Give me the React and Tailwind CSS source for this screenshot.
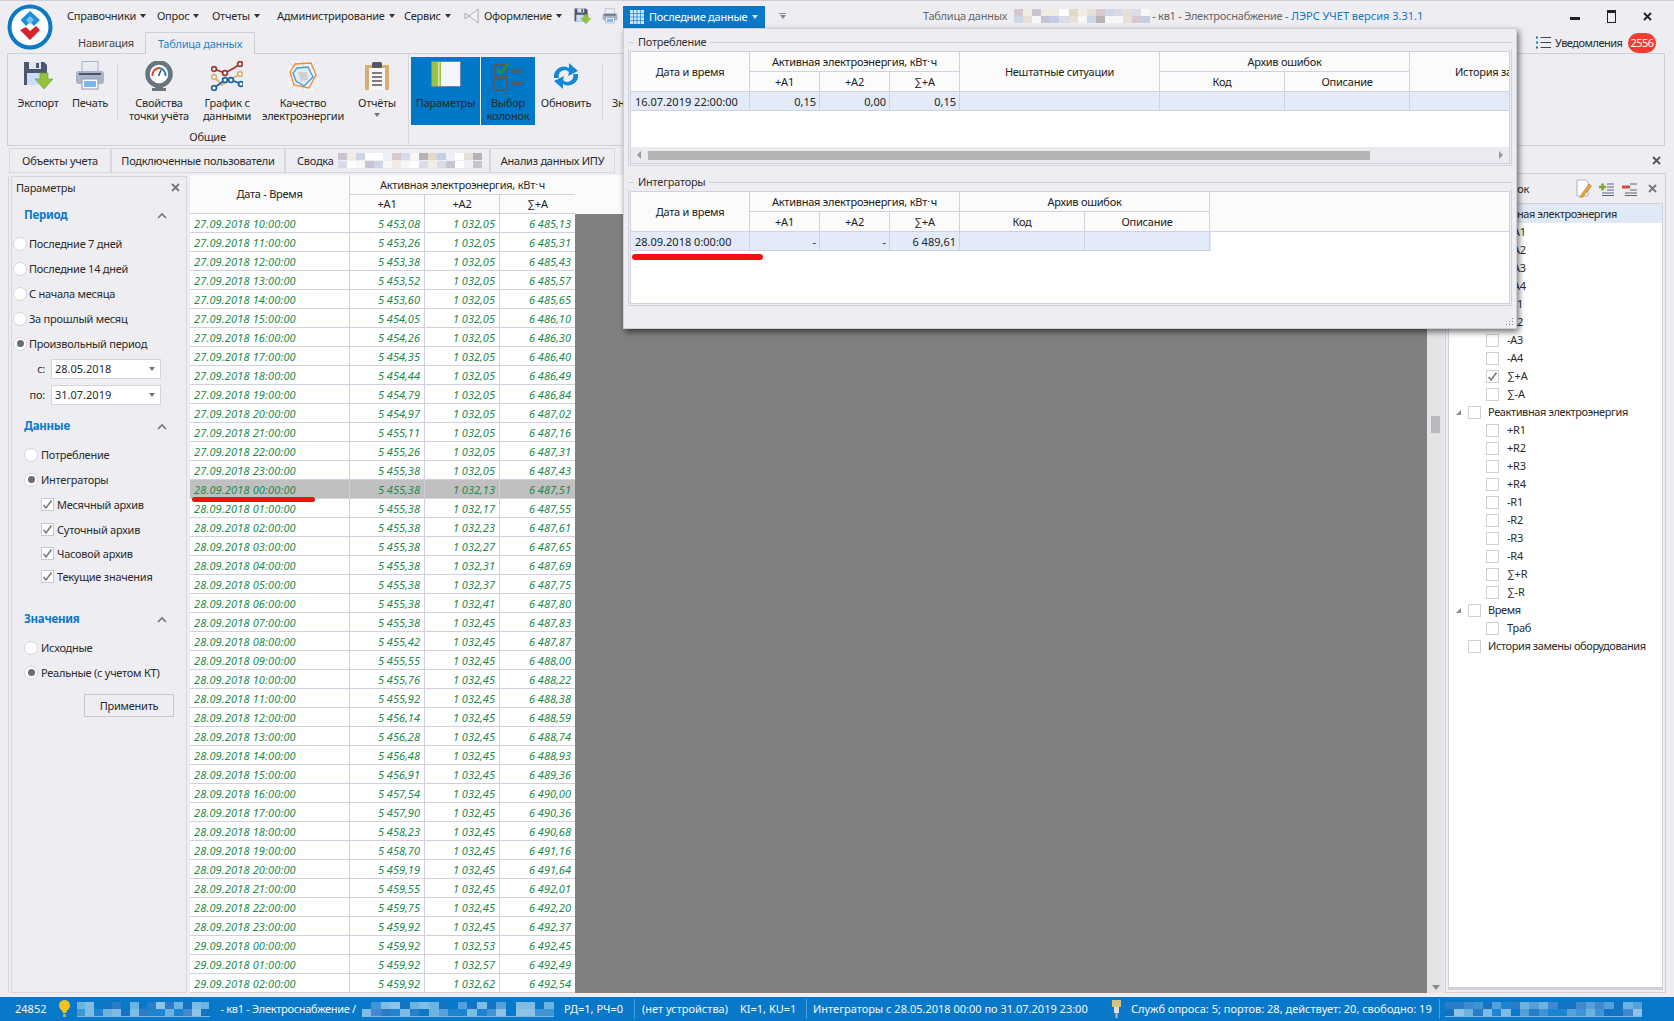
import React from 'react';

const RAW = `27.09.2018 10:00:00|5 453,08|1 032,05|6 485,13
27.09.2018 11:00:00|5 453,26|1 032,05|6 485,31
27.09.2018 12:00:00|5 453,38|1 032,05|6 485,43
27.09.2018 13:00:00|5 453,52|1 032,05|6 485,57
27.09.2018 14:00:00|5 453,60|1 032,05|6 485,65
27.09.2018 15:00:00|5 454,05|1 032,05|6 486,10
27.09.2018 16:00:00|5 454,26|1 032,05|6 486,30
27.09.2018 17:00:00|5 454,35|1 032,05|6 486,40
27.09.2018 18:00:00|5 454,44|1 032,05|6 486,49
27.09.2018 19:00:00|5 454,79|1 032,05|6 486,84
27.09.2018 20:00:00|5 454,97|1 032,05|6 487,02
27.09.2018 21:00:00|5 455,11|1 032,05|6 487,16
27.09.2018 22:00:00|5 455,26|1 032,05|6 487,31
27.09.2018 23:00:00|5 455,38|1 032,05|6 487,43
28.09.2018 00:00:00|5 455,38|1 032,13|6 487,51
28.09.2018 01:00:00|5 455,38|1 032,17|6 487,55
28.09.2018 02:00:00|5 455,38|1 032,23|6 487,61
28.09.2018 03:00:00|5 455,38|1 032,27|6 487,65
28.09.2018 04:00:00|5 455,38|1 032,31|6 487,69
28.09.2018 05:00:00|5 455,38|1 032,37|6 487,75
28.09.2018 06:00:00|5 455,38|1 032,41|6 487,80
28.09.2018 07:00:00|5 455,38|1 032,45|6 487,83
28.09.2018 08:00:00|5 455,42|1 032,45|6 487,87
28.09.2018 09:00:00|5 455,55|1 032,45|6 488,00
28.09.2018 10:00:00|5 455,76|1 032,45|6 488,22
28.09.2018 11:00:00|5 455,92|1 032,45|6 488,38
28.09.2018 12:00:00|5 456,14|1 032,45|6 488,59
28.09.2018 13:00:00|5 456,28|1 032,45|6 488,74
28.09.2018 14:00:00|5 456,48|1 032,45|6 488,93
28.09.2018 15:00:00|5 456,91|1 032,45|6 489,36
28.09.2018 16:00:00|5 457,54|1 032,45|6 490,00
28.09.2018 17:00:00|5 457,90|1 032,45|6 490,36
28.09.2018 18:00:00|5 458,23|1 032,45|6 490,68
28.09.2018 19:00:00|5 458,70|1 032,45|6 491,16
28.09.2018 20:00:00|5 459,19|1 032,45|6 491,64
28.09.2018 21:00:00|5 459,55|1 032,45|6 492,01
28.09.2018 22:00:00|5 459,75|1 032,45|6 492,20
28.09.2018 23:00:00|5 459,92|1 032,45|6 492,37
29.09.2018 00:00:00|5 459,92|1 032,53|6 492,45
29.09.2018 01:00:00|5 459,92|1 032,57|6 492,49
29.09.2018 02:00:00|5 459,92|1 032,62|6 492,54`.split('\n').map((l) => l.split('|'));

const PASTEL = ['#ffffff', '#eef2f8', '#d9dbe8', '#c9c4d4', '#e6e0d8', '#cdd6e6', '#b9b3b5', '#f0ece0', '#e2d9c6', '#d8c7cf', '#c3cfe6', '#f7f7f7'];
const BLUES = ['#0a78c8', '#3f94d6', '#6cb3e0', '#2a7cc9', '#1c84d0', '#559fdb', '#7fbce4', '#4388cf', '#1272c4', '#8ec3e6'];

function Mosaic({ cols, seed, palette, line }) {
  const cells = [];
  let s = seed;
  for (let i = 0; i < cols * 2; i++) {
    s = (s * 73 + 41) % 1009;
    cells.push(palette[s % palette.length]);
  }
  return (
    <div className={`flex flex-wrap w-full h-[15px] overflow-hidden ${line ? 'border-b border-[#7fb8e6]' : ''}`}>
      {cells.map((c, i) => (
        <div key={i} className="h-[7px]" style={{ background: c, width: `${100 / cols}%` }} />
      ))}
    </div>
  );
}

const Caret = ({ className = 'border-t-[#333]' }) => (
  <span className={`inline-block w-0 h-0 border-x-[3.5px] border-x-transparent border-t-[4px] ${className}`} />
);

const Logo = () => (
  <svg width="46" height="46" viewBox="0 0 46 46">
    <circle cx="23" cy="23" r="20.5" fill="#fff" stroke="#0b79c6" strokeWidth="4" />
    <path d="M23 7 L33 16 L27 22 L23 18 L19 22 L13.5 16 Z" fill="#1e8fd6" />
    <path d="M19 16 L23 12 L27 16 L23 20 Z" fill="#7cc4ee" />
    <path d="M29 22 L33 26 L23 36 L13 26 L19 23 L23 27 Z" fill="#d8232f" />
  </svg>
);

const SaveIcon = ({ s = 30 }) => (
  <svg width={s} height={s} viewBox="0 0 30 30">
    <path d="M1 1 H21 L24 4 V24 H1 Z" fill="#4c566e" />
    <rect x="6" y="1" width="12" height="7" fill="#dfe5ef" />
    <rect x="13" y="2" width="3" height="5" fill="#4c566e" />
    <rect x="4" y="12" width="17" height="12" fill="#c9def5" />
    <path d="M17 12 H25 V18 H30 L21 28 L12 18 H17 Z" fill="#94c23f" stroke="#6f9a2c" strokeWidth="0.6" />
  </svg>
);
const PrintIcon = ({ s = 30 }) => (
  <svg width={s} height={s} viewBox="0 0 30 30">
    <rect x="7" y="0.5" width="16" height="11" fill="#e9ecf3" stroke="#a9b1c4" />
    <rect x="1" y="10" width="28" height="13" rx="3" fill="#aab4c9" />
    <rect x="4" y="12" width="22" height="2" fill="#4b556c" />
    <rect x="7" y="18" width="16" height="10" fill="#fff" stroke="#8c96ad" />
    <rect x="9" y="20" width="12" height="6" fill="#7fb7e6" />
  </svg>
);
const GaugeIcon = () => (
  <svg width="28" height="30" viewBox="0 0 28 30">
    <rect x="10" y="20" width="8" height="9" fill="#6b7680" />
    <rect x="7" y="27" width="14" height="3" fill="#6b7680" />
    <circle cx="14" cy="13" r="11.5" fill="#fff" stroke="#68747e" strokeWidth="4.5" />
    <path d="M7.5 15 A7 7 0 0 1 14 7" fill="none" stroke="#e0432f" strokeWidth="2" />
    <path d="M14 7 A7 7 0 0 1 20.5 15" fill="none" stroke="#2f7fc7" strokeWidth="2" />
    <path d="M13.5 15 L16 9" stroke="#444" strokeWidth="1.4" />
  </svg>
);
const Dot = ({ x, y, c }) => <circle cx={x} cy={y} r="2.4" fill="#fff" stroke={c} strokeWidth="1.8" />;
const ChartIcon = () => (
  <svg width="32" height="30" viewBox="0 0 32 30">
    <polyline points="3,8 14,12 23,7 29,3" fill="none" stroke="#a0392e" strokeWidth="1.8" />
    <polyline points="3,16 11,24 20,18 29,13" fill="none" stroke="#d9b27c" strokeWidth="1.8" />
    <polyline points="3,27 14,19 20,19 30,23" fill="none" stroke="#1f66a8" strokeWidth="1.8" />
    <Dot x="3" y="8" c="#a0392e" /><Dot x="14" y="12" c="#a0392e" /><Dot x="29" y="3" c="#a0392e" />
    <Dot x="3" y="16" c="#d9b27c" /><Dot x="29" y="13" c="#d9b27c" />
    <Dot x="3" y="27" c="#1f66a8" /><Dot x="14" y="19" c="#1f66a8" /><Dot x="20" y="19" c="#1f66a8" /><Dot x="30" y="23" c="#1f66a8" />
  </svg>
);
const RadarIcon = () => (
  <svg width="30" height="30" viewBox="0 0 30 30">
    <rect x="0" y="0" width="30" height="30" fill="#f3f3f5" />
    <path d="M0 0 L30 30 M30 0 L0 30 M15 0 V30 M0 15 H30" stroke="#cfcfd6" strokeWidth="0.8" />
    <path d="M7 3 L23 2 L28 14 L21 27 L6 24 L2 11 Z" fill="none" stroke="#f08a2c" strokeWidth="1.3" />
    <path d="M9 7 L20 6 L25 16 L16 25 L8 20 L5 12 Z" fill="#e4ebf3" stroke="#3d9bd8" strokeWidth="1.3" />
    <path d="M10 11 L19 11 L20 19 L13 20 Z" fill="#cfcfd4" />
  </svg>
);
const ClipIcon = () => (
  <svg width="26" height="30" viewBox="0 0 26 30">
    <rect x="1" y="4" width="24" height="25" fill="#d9ad74" />
    <rect x="5" y="7" width="16" height="22" fill="#f7f7f7" />
    <rect x="8" y="1" width="10" height="6" rx="1.5" fill="#55585e" />
    <path d="M8 12 H18 M8 16 H18 M8 20 H18 M8 24 H18" stroke="#7d7d7d" strokeWidth="1.8" />
  </svg>
);
const PanelIcon = () => (
  <svg width="30" height="26" viewBox="0 0 30 26">
    <rect x="0.5" y="0.5" width="29" height="25" rx="1" fill="#f4f6fb" stroke="#7386a8" />
    <rect x="1" y="1" width="9" height="24" fill="#9cc24a" />
    <rect x="7" y="1" width="1.5" height="24" fill="#d9e8b0" />
  </svg>
);
const CheckIcon = () => (
  <svg width="30" height="30" viewBox="0 0 30 30">
    <rect x="1" y="4" width="13" height="11" fill="none" stroke="#515a62" strokeWidth="2" />
    <rect x="1" y="18" width="13" height="11" fill="none" stroke="#515a62" strokeWidth="2" />
    <path d="M4 8 L8 12 L16 2" fill="none" stroke="#2f8f3a" strokeWidth="2.4" />
    <rect x="19" y="8" width="10" height="4" fill="#515a62" />
    <rect x="19" y="21" width="10" height="4" fill="#515a62" />
  </svg>
);
const RefreshIcon = () => (
  <svg width="32" height="30" viewBox="0 0 32 30">
    <path d="M4 17 A10 10 0 0 1 19 7 L19 2 L28 10 L18 15 L19 11 A6 6 0 0 0 9 17 Z" fill="#1488d8" />
    <path d="M28 13 A10 10 0 0 1 13 23 L13 28 L4 20 L14 15 L13 19 A6 6 0 0 0 23 13 Z" fill="#1488d8" />
  </svg>
);
const Cross = ({ className = '', color = '#777' }) => (
  <svg width="9" height="9" viewBox="0 0 9 9" className={className}>
    <path d="M1 1 L8 8 M8 1 L1 8" stroke={color} strokeWidth="1.8" />
  </svg>
);
const Chevron = () => (
  <svg width="10" height="7" viewBox="0 0 10 7">
    <path d="M1 6 L5 2 L9 6" fill="none" stroke="#777" strokeWidth="1.7" />
  </svg>
);
const Tick = () => (
  <svg width="11" height="11" viewBox="0 0 11 11">
    <path d="M1.5 6 L4 9 L9.5 1.5" fill="none" stroke="#777" strokeWidth="1.5" />
  </svg>
);

const Radio = ({ on, label, ind = 'pl-[12px]', gap = 'ml-[3px]', h = 'h-[25px]' }) => (
  <div className={`flex items-center ${h} ${ind}`}>
    <span className="w-[14px] h-[14px] rounded-full bg-white border border-[#d6d6de] flex items-center justify-center shrink-0">
      {on && <span className="w-[7px] h-[7px] rounded-full bg-[#6b6b70]" />}
    </span>
    <span className={gap}>{label}</span>
  </div>
);
const Check = ({ label, h = 'h-[25px]' }) => (
  <div className={`flex items-center pl-[29px] ${h}`}>
    <span className="w-[13px] h-[13px] bg-white border border-[#c8c8d2] flex items-center justify-center shrink-0"><Tick /></span>
    <span className="ml-[3px]">{label}</span>
  </div>
);
const Section = ({ title, className = '' }) => (
  <div className={`flex items-center justify-between h-[22px] pl-[12px] pr-[19px] ${className}`}>
    <span className="font-bold text-[#0b78c9] text-[11.5px]">{title}</span>
    <Chevron />
  </div>
);
const DateRow = ({ label, value }) => (
  <div className="flex items-center h-[26px]">
    <span className="w-[34px] text-right pr-[1px]">{label}</span>
    <div className="ml-[5px] w-[110px] h-[20px] bg-white border border-[#d4d4dc] flex items-center justify-between pl-[3px] pr-[5px]">
      <span className="tracking-normal">{value}</span>
      <Caret className="border-t-[#777]" />
    </div>
  </div>
);

const RibbonBtn = ({ w, icon, lines, active, caret }) => (
  <div className={`${w} h-[68px] flex flex-col items-center pt-[4px] shrink-0 ${active ? 'bg-[#0078c8]' : ''}`}>
    <div className="h-[35px] flex items-start justify-center">{icon}</div>
    {lines.map((l) => (
      <div key={l} className="leading-[13px] whitespace-nowrap">{l}</div>
    ))}
    {caret && <div className="mt-[4px] leading-[0]"><Caret className="border-t-[#777]" /></div>}
  </div>
);

const HBORDER = 'border-[#d0d0de]';
const HC = ({ w, children, className = '' }) => (
  <div className={`${w} shrink-0 flex items-center justify-center border-r border-b ${HBORDER} text-[#222] ${className}`}>{children}</div>
);

function MainGrid() {
  return (
    <div className="w-[385px] shrink-0 flex flex-col mt-[1px]">
      <div className="flex h-[39px] bg-[#fbfbfb]">
        <HC w="w-[160px]"><span className="-mt-[1px]">Дата - Время</span></HC>
        <div className="w-[225px] flex flex-col">
          <div className={`h-[20px] flex items-center justify-center border-b ${HBORDER}`}>Активная электроэнергия, кВт⋅ч</div>
          <div className="flex flex-1">
            <HC w="w-[75px]">+A1</HC>
            <HC w="w-[75px]">+A2</HC>
            <HC w="w-[75px]" className="border-r-0">∑+A</HC>
          </div>
        </div>
      </div>
      {RAW.map((r, i) => (
        <div key={r[0]} className={`relative flex h-[19px] border-b ${HBORDER} italic tracking-normal text-[#1c8a4e] ${i === 14 ? 'bg-[#c0c0c0]' : 'bg-white'}`}>
          <div className={`w-[160px] pl-[4px] pt-[1px] flex items-center border-r ${HBORDER} tracking-[0.15px]`}>{r[0]}</div>
          <div className={`w-[75px] pr-[4px] pt-[1px] flex items-center justify-end border-r ${HBORDER}`}>{r[1]}</div>
          <div className={`w-[75px] pr-[4px] pt-[1px] flex items-center justify-end border-r ${HBORDER}`}>{r[2]}</div>
          <div className="w-[75px] pr-[4px] pt-[1px] flex items-center justify-end">{r[3]}</div>
          {i === 14 && <div className="absolute z-10 left-[2px] top-[17px] w-[123px] h-[5px] rounded-full bg-[#f01010]" />}
        </div>
      ))}
    </div>
  );
}

const TREE = [
  ['p', 'Активная электроэнергия', true], ['c', '+A1'], ['c', '+A2'], ['c', '+A3'], ['c', '+A4'],
  ['c', '-A1'], ['c', '-A2'], ['c', '-A3'], ['c', '-A4'], ['c', '∑+A', true], ['c', '∑-A'],
  ['p', 'Реактивная электроэнергия'], ['c', '+R1'], ['c', '+R2'], ['c', '+R3'], ['c', '+R4'],
  ['c', '-R1'], ['c', '-R2'], ['c', '-R3'], ['c', '-R4'], ['c', '∑+R'], ['c', '∑-R'],
  ['p', 'Время'], ['c', 'Траб'], ['q', 'История замены оборудования'],
];

function TreeRow({ t, i }) {
  const [kind, label, checked] = t;
  const box = (
    <span className="w-[13px] h-[13px] bg-white border border-[#cfcfd8] flex items-center justify-center shrink-0">
      {kind === 'c' && checked && <Tick />}
    </span>
  );
  if (kind === 'c') {
    return (
      <div className="flex items-center h-[18px] pl-[37px]">
        {box}
        <span className="ml-[8px]">{label}</span>
      </div>
    );
  }
  return (
    <div className={`flex items-center ${i === 0 ? 'h-[19px] bg-[#e0e9f6]' : 'h-[18px]'} pl-[6px]`}>
      <span className="w-[13px] shrink-0">
        {kind === 'p' && (
          <svg width="7" height="7" viewBox="0 0 7 7"><path d="M6 1 V6 H1 Z" fill="#8a8a8a" /></svg>
        )}
      </span>
      {box}
      <span className="ml-[7px] tracking-[-0.4px]">{label}</span>
    </div>
  );
}

const Sigma = '∑+A';
const PopHead = ({ w, children, className = '' }) => (
  <div className={`${w} shrink-0 flex items-center justify-center border-r ${HBORDER} ${className}`}>{children}</div>
);
const DataCell = ({ w, children, left }) => (
  <div className={`${w} shrink-0 h-full pt-[1px] flex items-center border-r tracking-normal ${HBORDER} ${left ? 'pl-[4px]' : 'justify-end pr-[3px]'}`}>{children}</div>
);

function Popup() {
  const Legend = ({ text }) => (
    <div className="flex items-center h-[14px]">
      <div className={`w-[6px] h-px bg-[#d0d0de]`} />
      <span className="px-[4px] text-[#333]">{text}</span>
      <div className="flex-1 h-px bg-[#d0d0de]" />
    </div>
  );
  const EnergyHead = () => (
    <>
      <PopHead w="w-[119px]">Дата и время</PopHead>
      <div className={`w-[210px] shrink-0 flex flex-col border-r ${HBORDER}`}>
        <div className={`h-[20px] flex items-center justify-center border-b ${HBORDER}`}>Активная электроэнергия, кВт⋅ч</div>
        <div className="flex flex-1">
          <PopHead w="w-[70px]">+A1</PopHead>
          <PopHead w="w-[70px]">+A2</PopHead>
          <div className="w-[69px] flex items-center justify-center">{Sigma}</div>
        </div>
      </div>
    </>
  );
  const ErrHead = () => (
    <div className={`w-[250px] shrink-0 flex flex-col border-r ${HBORDER}`}>
      <div className={`h-[20px] flex items-center justify-center border-b ${HBORDER}`}>Архив ошибок</div>
      <div className="flex flex-1">
        <PopHead w="w-[125px]">Код</PopHead>
        <div className="w-[124px] flex items-center justify-center">Описание</div>
      </div>
    </div>
  );
  return (
    <div className="absolute left-[623px] top-[27px] w-[894px] h-[301px] bg-[#eeeef2] border border-[#cfcfd8] shadow-[2px_3px_6px_rgba(0,0,0,0.55)] px-[4px] pt-[6px] text-[#222] z-20">
      <Legend text="Потребление" />
      <div className="border-x border-b border-[#d0d0de] px-[1px] pt-[3px] pb-[1px] h-[117px]">
        <div className={`h-[113px] border ${HBORDER} bg-white flex flex-col overflow-hidden -mt-[1px]`}>
          <div className={`flex h-[40px] bg-[#fbfbfb] border-b ${HBORDER} shrink-0`}>
            <EnergyHead />
            <PopHead w="w-[200px]">Нештатные ситуации</PopHead>
            <ErrHead />
            <div className="flex-1 overflow-hidden whitespace-nowrap flex items-center pl-[45px]">История за</div>
          </div>
          <div className={`flex h-[19px] bg-[#e2ebf7] border-b ${HBORDER} shrink-0`}>
            <DataCell w="w-[119px]" left>16.07.2019 22:00:00</DataCell>
            <DataCell w="w-[70px]">0,15</DataCell>
            <DataCell w="w-[70px]">0,00</DataCell>
            <DataCell w="w-[70px]">0,15</DataCell>
            <DataCell w="w-[200px]" />
            <DataCell w="w-[125px]" />
            <DataCell w="w-[125px]" />
          </div>
          <div className="flex-1" />
          <div className="h-[16px] bg-[#ebebef] flex items-center shrink-0 pl-[6px] pr-[6px]">
            <span className="w-0 h-0 border-y-[4px] border-y-transparent border-r-[4px] border-r-[#999]" />
            <div className="ml-[7px] w-[722px] h-[9px] bg-[#b3b3b3]" />
            <span className="ml-auto w-0 h-0 border-y-[4px] border-y-transparent border-l-[4px] border-l-[#999]" />
          </div>
        </div>
      </div>
      <div className="mt-[9px]"><Legend text="Интеграторы" /></div>
      <div className="border-x border-b border-[#d0d0de] px-[1px] pt-[3px] pb-[1px] h-[117px]">
        <div className={`relative h-[113px] border ${HBORDER} bg-white flex flex-col -mt-[1px]`}>
          <div className={`flex h-[40px] bg-[#fbfbfb] border-b ${HBORDER} shrink-0`}>
            <EnergyHead />
            <ErrHead />
          </div>
          <div className={`flex h-[19px] bg-[#e2ebf7] w-[580px] border-b ${HBORDER} shrink-0`}>
            <DataCell w="w-[119px]" left>28.09.2018 0:00:00</DataCell>
            <DataCell w="w-[70px]">-</DataCell>
            <DataCell w="w-[70px]">-</DataCell>
            <DataCell w="w-[70px]">6 489,61</DataCell>
            <DataCell w="w-[125px]" />
            <DataCell w="w-[125px]" />
          </div>
          <div className="absolute left-[1px] top-[62px] w-[131px] h-[6px] rounded-full bg-[#f01010]" />
        </div>
      </div>
      <svg width="9" height="9" viewBox="0 0 9 9" className="absolute right-[2px] bottom-[2px]">
        <path d="M7 1h1v1H7zM7 4h1v1H7zM4 4h1v1H4zM7 7h1v1H7zM4 7h1v1H4zM1 7h1v1H1z" fill="#888" />
      </svg>
    </div>
  );
}

const StatusItem = ({ w, className = '', children }) => (
  <div className={`${w} shrink-0 flex items-center whitespace-nowrap ${className}`}>{children}</div>
);
const Sep = () => <div className="w-px h-[20px] bg-[#4d9fdc] shrink-0" />;

export default function App() {
  return (
    <div className="relative w-[1674px] h-[1021px] overflow-hidden bg-[#eeeef2] flex flex-col text-[11px] leading-[14px] tracking-[-0.25px] text-[#2a2a2a] font-['Noto_Sans','Liberation_Sans',sans-serif] border-t border-[#cfcfd8]">
      {/* Header */}
      <div className="flex h-[52px] shrink-0">
        <div className="w-[67px] shrink-0 pl-[7px] pt-[3px]"><Logo /></div>
        <div className="flex-1 flex flex-col min-w-0">
          <div className="flex items-center h-[31px] pb-[1px]">
            {[['Справочники', 'w-[90px]'], ['Опрос', 'w-[55px]'], ['Отчеты', 'w-[65px]'], ['Администрирование', 'w-[127px]'], ['Сервис', 'w-[60px]']].map(([t, w]) => (
              <div key={t} className={`${w} flex items-center gap-[4px]`}>{t}<Caret /></div>
            ))}
            <svg width="16" height="16" viewBox="0 0 16 16" className="mr-[4px]">
              <path d="M1 5 L5 8 L1 11 Z M5 8 L14 1 V15 Z" fill="#f4f4f6" stroke="#aaa" strokeWidth="1" />
            </svg>
            <div className="w-[90px] flex items-center gap-[4px]">Оформление<Caret /></div>
            <div className="w-[28px]"><SaveIcon s={17} /></div>
            <div className="w-[21px]"><PrintIcon s={16} /></div>
            <div className="w-[142px] h-[22px] bg-[#0a78c8] text-white flex items-center pl-[7px] gap-[5px] mt-[1px]">
              <svg width="14" height="14" viewBox="0 0 14 14">
                <rect width="14" height="14" fill="#cfe6f8" />
                <path d="M0 3.5H14M0 7H14M0 10.5H14M3.5 0V14M7 0V14M10.5 0V14" stroke="#2f8bd3" strokeWidth="0.8" />
              </svg>
              <span>Последние данные</span>
              <Caret className="border-t-[#cfe6f8]" />
            </div>
            <div className="w-[35px] flex flex-col items-center">
              <div className="w-[7px] h-px bg-[#888] mb-[1px]" />
              <Caret className="border-t-[#888]" />
            </div>
            <div className="ml-[123px] text-[#666] flex items-center whitespace-nowrap">
              <span>Таблица данных</span>
              <div className="w-[136px] ml-[7px]"><Mosaic cols={15} seed={17} palette={PASTEL} /></div>
              <span className="ml-[2px]">- кв1 - Электроснабжение - </span>
              <span className="text-[#0b78c9] ml-[3px] tracking-normal">ЛЭРС УЧЕТ версия 3.31.1</span>
            </div>
            <div className="ml-auto flex items-center pr-[22px] gap-[27px]">
              <div className="w-[10px] h-[3px] bg-[#222] mt-[5px]" />
              <div className="w-[9px] h-[13px] border border-t-[3px] border-[#222]" />
              <Cross color="#222" />
            </div>
          </div>
          <div className="flex flex-1 items-end">
            <div className="w-[78px] h-[21px] flex items-center justify-center text-[#444]">Навигация</div>
            <div className="w-[110px] h-[22px] -mb-px z-10 relative flex items-center justify-center bg-[#eeeef2] border border-b-0 border-[#cfcfd8] text-[#1a84cf]">Таблица данных</div>
            <div className="ml-auto flex items-center h-[21px] pr-[18px]">
              <svg width="15" height="13" viewBox="0 0 15 13">
                <path d="M0 1.5H2M0 6.5H2M0 11.5H2" stroke="#0b78c9" strokeWidth="2" />
                <path d="M4.5 1.5H15M4.5 6.5H15M4.5 11.5H15" stroke="#444" strokeWidth="1.2" />
              </svg>
              <span className="ml-[4px] w-[68px] tracking-[-0.5px] whitespace-nowrap">Уведомления</span>
              <span className="ml-[5px] w-[28px] h-[20px] rounded-full bg-[#f23a30] text-white flex items-center justify-center tracking-[-0.5px]">2556</span>
            </div>
          </div>
        </div>
      </div>

      {/* Ribbon */}
      <div className="mx-[7px] mr-[9px] h-[93px] shrink-0 border border-[#cfcfd8] flex pl-[5px] bg-[#eeeef2]">
        <div className="w-[396px] shrink-0 flex flex-col border-r border-[#d6d6de]">
          <div className="flex pt-[3px] h-[73px]">
            <RibbonBtn w="w-[50px]" icon={<SaveIcon />} lines={['Экспорт']} />
            <RibbonBtn w="w-[54px]" icon={<PrintIcon />} lines={['Печать']} />
            <div className="w-px h-[58px] bg-[#d6d6de] mt-[6px] shrink-0" />
            <RibbonBtn w="w-[82px]" icon={<GaugeIcon />} lines={['Свойства', 'точки учёта']} />
            <RibbonBtn w="w-[54px]" icon={<ChartIcon />} lines={['График с', 'данными']} />
            <RibbonBtn w="w-[98px]" icon={<RadarIcon />} lines={['Качество', 'электроэнергии']} />
            <RibbonBtn w="w-[50px]" icon={<ClipIcon />} lines={['Отчёты']} caret />
          </div>
          <div className="text-center pr-[6px] mt-[3px]">Общие</div>
        </div>
        <div className="flex pt-[3px] pl-[2px] min-w-0">
          <RibbonBtn w="w-[69px]" active icon={<PanelIcon />} lines={['Параметры']} />
          <div className="w-px" />
          <RibbonBtn w="w-[54px]" active icon={<CheckIcon />} lines={['Выбор', 'колонок']} />
          <RibbonBtn w="w-[62px]" icon={<RefreshIcon />} lines={['Обновить']} />
          <div className="w-px h-[58px] bg-[#d6d6de] mt-[6px] ml-[5px] shrink-0" />
          <div className="ml-[9px] mt-[39px]">Знач</div>
        </div>
      </div>

      {/* Document tabs */}
      <div className="flex items-end h-[28px] shrink-0 pl-[9px] pr-[13px] pb-[1px]">
        {[['Объекты учета', 'w-[102px]'], ['Подключенные пользователи', 'w-[174px]']].map(([t, w]) => (
          <div key={t} className={`${w} h-[25px] flex items-center justify-center border border-[#d6d6de]`}>{t}</div>
        ))}
        <div className="w-[205px] h-[25px] flex items-center pl-[11px] border border-[#d6d6de]">
          <span>Сводка</span>
          <div className="w-[144px] ml-[4px]"><Mosaic cols={16} seed={101} palette={PASTEL} /></div>
        </div>
        <div className="w-[125px] h-[25px] flex items-center justify-center border border-[#d6d6de]">Анализ данных ИПУ</div>
        <Cross className="ml-auto mb-[8px]" color="#555" />
      </div>

      {/* Main */}
      <div className="flex-1 flex min-h-0">
        <div className="w-[190px] shrink-0 pl-[8px] pr-[3px] pt-[2px] flex">
          <div className="w-full border-l border-[#d6d6de] pl-[2px] flex">
            <div className="w-full border border-[#d6d6de] bg-[#eeeef2] flex flex-col">
              <div className="flex items-center justify-between h-[21px] pl-[4px] pr-[6px] shrink-0">
                <span>Параметры</span>
                <Cross />
              </div>
              <Section title="Период" className="mt-[6px]" />
              <div className="mt-[5px] -ml-[5px]">
                <Radio label="Последние 7 дней" ind="pl-[6px]" gap="ml-[2px]" />
                <Radio label="Последние 14 дней" ind="pl-[6px]" gap="ml-[2px]" />
                <Radio label="С начала месяца" ind="pl-[6px]" gap="ml-[2px]" />
                <Radio label="За прошлый месяц" ind="pl-[6px]" gap="ml-[2px]" />
                <Radio on label="Произвольный период" ind="pl-[6px]" gap="ml-[2px]" />
              </div>
              <DateRow label="с:" value="28.05.2018" />
              <DateRow label="по:" value="31.07.2019" />
              <Section title="Данные" className="mt-[7px]" />
              <div className="mt-[5px]">
                <Radio label="Потребление" ind="pl-[12px]" />
                <Radio on label="Интеграторы" ind="pl-[12px]" />
                <Check label="Месячный архив" />
                <Check label="Суточный архив" />
                <Check label="Часовой архив" h="h-[23px]" />
                <Check label="Текущие значения" h="h-[23px]" />
              </div>
              <Section title="Значения" className="mt-[20px]" />
              <div className="mt-[5px]">
                <Radio label="Исходные" />
                <Radio on label="Реальные (с учетом КТ)" />
              </div>
              <div className="ml-[72px] mt-[9px] w-[90px] h-[23px] border border-[#c8c8d4] flex items-center justify-center">Применить</div>
            </div>
          </div>
        </div>

        <MainGrid />

        <div className="flex-1 flex flex-col min-w-0 mt-[1px]">
          <div className="h-[39px] bg-[#fbfbfb] shrink-0" />
          <div className="flex-1 bg-[#808080]" />
        </div>

        <div className="w-[17px] shrink-0 bg-[#e4e4e6] flex flex-col items-center mt-[1px]">
          <div className="mt-[241px] w-[9px] h-[17px] bg-[#b9b9bd]" />
          <div className="mt-auto mb-[3px] w-0 h-0 border-x-[4px] border-x-transparent border-t-[5px] border-t-[#8a8a8e]" />
        </div>

        <div className="w-[230px] shrink-0 pl-[1px] pr-[8px] flex -mt-[1px]">
          <div className="w-full border border-[#d0d0da] px-[3px] flex flex-col bg-[#eeeef2]">
            <div className="flex items-center h-[29px] shrink-0 pl-[1px] pr-[5px]">
              <span>Выбор колонок</span>
              <div className="ml-auto flex items-center gap-[7px]">
                <svg width="16" height="19" viewBox="0 0 16 19">
                  <path d="M1 1 H10 L12 3 V17 H1 Z" fill="#fff" stroke="#aab2c6" />
                  <path d="M5 16 L13 5 L15.5 7 L7 18 L4 18.5 Z" fill="#e8a33a" stroke="#a86f1a" strokeWidth="0.5" />
                </svg>
                <svg width="16" height="14" viewBox="0 0 16 14">
                  <path d="M8 2H15M8 5H15M8 8H15M3 11H15M3 13.5H15" stroke="#5a6478" strokeWidth="1" />
                  <path d="M0 5 H7 M3.5 1.5 V8.5" stroke="#7cab2d" strokeWidth="2.6" />
                </svg>
                <svg width="16" height="14" viewBox="0 0 16 14">
                  <path d="M8 2H15M8 8H15M3 11H15M3 13.5H15" stroke="#5a6478" strokeWidth="1" />
                  <path d="M0 5 H8" stroke="#d9473c" strokeWidth="3" />
                </svg>
                <Cross className="ml-[3px]" />
              </div>
            </div>
            <div className="flex-1 bg-white border border-[#d0d0da] border-b-[3px] mb-[2px] -mx-[1px]">
              {TREE.map((t, i) => <TreeRow key={t[1]} t={t} i={i} />)}
            </div>
          </div>
        </div>
      </div>

      {/* Status bar */}
      <div className="h-[24px] mt-[4px] shrink-0 bg-[#0a78c8] text-[#f2f8fd] flex items-center pl-[15px] tracking-normal">
        <StatusItem w="w-[44px]">24852</StatusItem>
        <StatusItem w="w-[17.5px]">
          <svg width="11" height="18" viewBox="0 0 11 18">
            <path d="M5.5 0 A5.5 5.5 0 0 1 11 5.5 C11 9 7.5 10 7 13 H4 C3.5 10 0 9 0 5.5 A5.5 5.5 0 0 1 5.5 0 Z" fill="#f5c21b" />
            <rect x="4" y="14" width="3" height="3" fill="#d6a61a" />
          </svg>
        </StatusItem>
        <div className="w-[133px] shrink-0"><Mosaic cols={15} seed={7} palette={BLUES} line /></div>
        <StatusItem w="w-[152px]" className="pl-[11px] tracking-[-0.3px]">- кв1 - Электроснабжение /</StatusItem>
        <div className="w-[192.5px] shrink-0"><Mosaic cols={20} seed={29} palette={BLUES} line /></div>
        <StatusItem w="w-[80px]" className="pl-[10px]">РД=1, РЧ=0</StatusItem>
        <Sep />
        <StatusItem w="w-[105px]" className="pl-[7px]">(нет устройства)</StatusItem>
        <StatusItem w="w-[66px]">KI=1, KU=1</StatusItem>
        <Sep />
        <StatusItem w="w-[303px]" className="pl-[6px]">Интеграторы с 28.05.2018 00:00 по 31.07.2019 23:00</StatusItem>
        <StatusItem w="w-[21px]">
          <svg width="13" height="18" viewBox="0 0 13 18">
            <rect x="2" y="0" width="9" height="7" fill="#d9c27c" />
            <rect x="4" y="7" width="5" height="6" fill="#ddd" />
            <rect x="5.5" y="13" width="2" height="5" fill="#bbb" />
          </svg>
        </StatusItem>
        <StatusItem w="w-[308px]">Служб опроса: 5; портов: 28, действует: 20, свободно: 19</StatusItem>
        <Sep />
        <div className="w-[197px] ml-[5px] shrink-0"><Mosaic cols={21} seed={53} palette={BLUES} line /></div>
      </div>

      <Popup />
    </div>
  );
}
